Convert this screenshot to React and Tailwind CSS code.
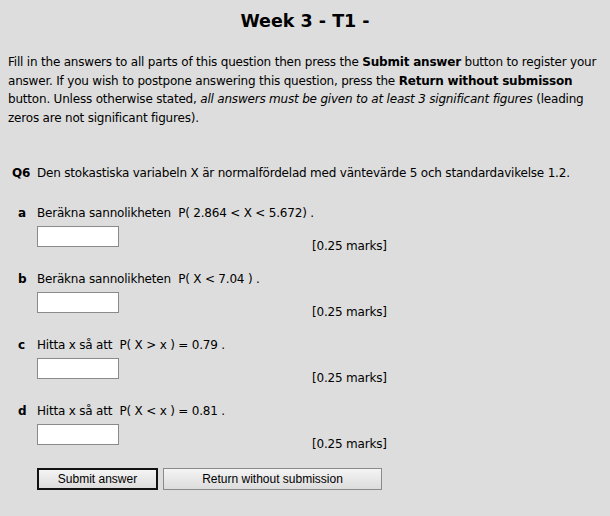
const parts = [
  { letter: "a", text: "Beräkna sannolikheten", expr: "P( 2.864 < X < 5.672) ." },
  { letter: "b", text: "Beräkna sannolikheten", expr: "P( X < 7.04 ) ." },
  { letter: "c", text: "Hitta x så att", expr: "P( X > x ) = 0.79 ." },
  { letter: "d", text: "Hitta x så att", expr: "P( X < x ) = 0.81 ." },
];

const Part = ({ letter, text, expr }) => (
  <div className="mb-[15px]">
    <div className="flex h-[18px] items-center">
      <span className="w-[25px] pl-[6px] font-bold">{letter}</span>
      <span>
        {text}&nbsp;&nbsp;{expr}
      </span>
    </div>
    <div className="mt-[4px] flex">
      <input
        type="text"
        className="ml-[25px] h-[21px] w-[82px] border border-[#8a8a8a] bg-white outline-none"
      />
      <span className="ml-[193px] mt-[11px] leading-[18px]">[0.25 marks]</span>
    </div>
  </div>
);

export default function App() {
  return (
    <div
      className="min-h-[516px] w-[610px] bg-[#dddddd] px-[8px] pt-[9px] text-[12px] leading-[18.5px] tracking-[-0.2px] text-black"
      style={{ fontFamily: '"DejaVu Sans", Verdana, sans-serif' }}
    >
      <h1 className="text-center text-[17.5px] font-bold leading-[24px] tracking-normal">Week 3 - T1 -</h1>
      <p className="mt-[20px]">
        Fill in the answers to all parts of this question then press the <b>Submit answer</b> button to register your
        answer. If you wish to postpone answering this question, press the <b>Return without submisson</b> button.
        Unless otherwise stated, <i>all answers must be given to at least 3 significant figures</i> (leading zeros are
        not significant figures).
      </p>
      <div className="mt-[37px] pl-[4px]">
        <div className="flex h-[18px] items-center">
          <span className="w-[25px] font-bold">Q6</span>
          <span>Den stokastiska variabeln X är normalfördelad med väntevärde 5 och standardavikelse 1.2.</span>
        </div>
        <div className="mt-[22px]">
          {parts.map((p) => (
            <Part key={p.letter} {...p} />
          ))}
        </div>
        <div
          className="mt-0 flex gap-[5px] pl-[25px] text-[12px] tracking-normal"
          style={{ fontFamily: '"Liberation Sans", Arial, sans-serif' }}
        >
          <button className="h-[22px] w-[121px] border-2 border-[#111] bg-gradient-to-b from-[#f4f4f4] to-[#dcdcdc] leading-[18px]">
            Submit answer
          </button>
          <button className="h-[22px] w-[219px] border border-[#8a8a8a] bg-gradient-to-b from-[#f4f4f4] to-[#dcdcdc]">
            Return without submission
          </button>
        </div>
      </div>
    </div>
  );
}
